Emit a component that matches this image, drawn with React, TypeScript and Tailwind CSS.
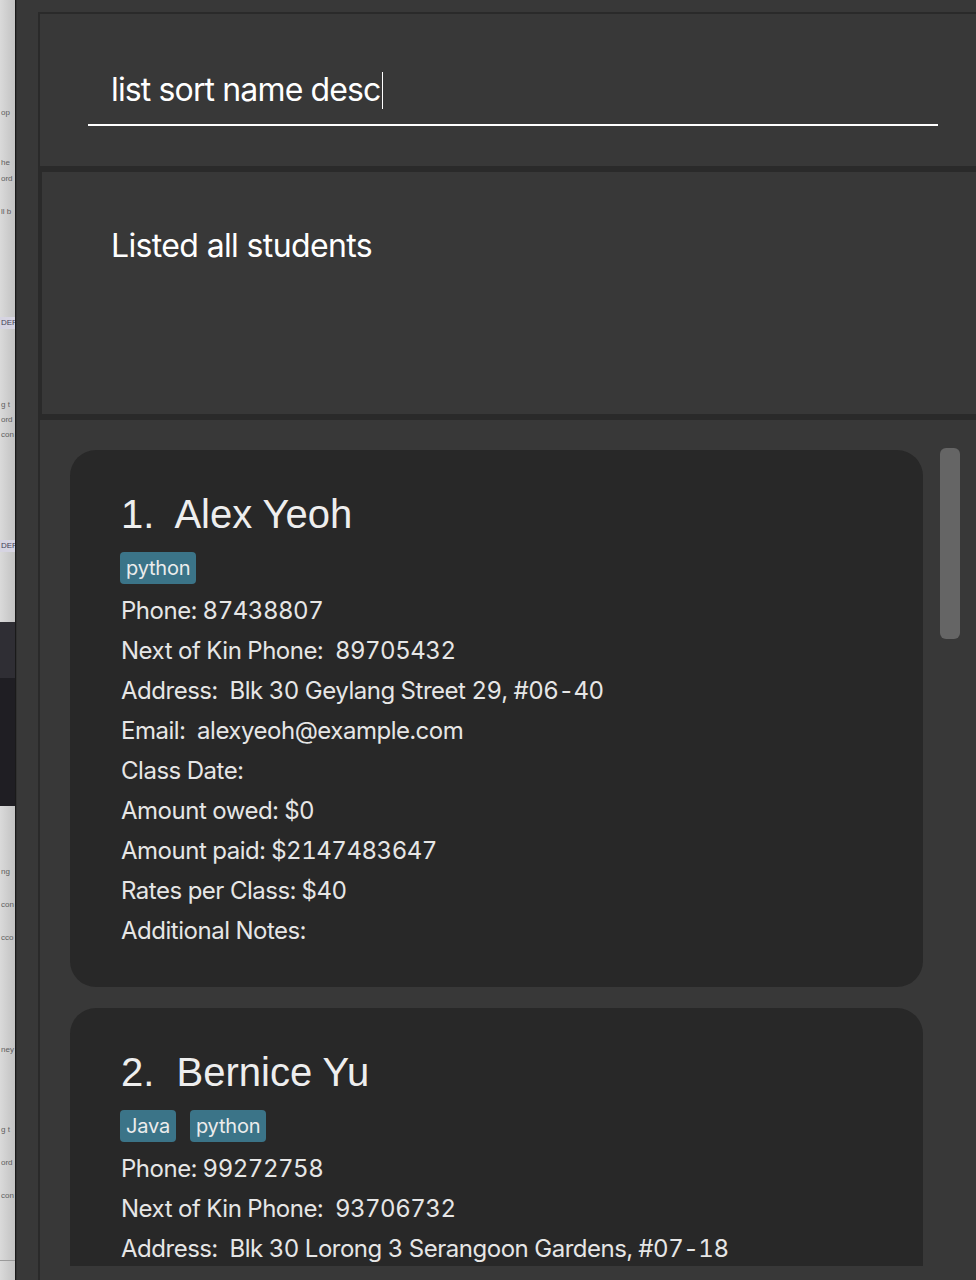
import React from "react";

type Student = {
  name: string;
  tags: string[];
  lines: string[];
};

const students: Student[] = [
  {
    name: "1.  Alex Yeoh",
    tags: ["python"],
    lines: [
      "Phone: 87438807",
      "Next of Kin Phone:  89705432",
      "Address:  Blk 30 Geylang Street 29, #06-40",
      "Email:  alexyeoh@example.com",
      "Class Date: ",
      "Amount owed: $0",
      "Amount paid: $2147483647",
      "Rates per Class: $40",
      "Additional Notes: ",
    ],
  },
  {
    name: "2.  Bernice Yu",
    tags: ["Java", "python"],
    lines: [
      "Phone: 99272758",
      "Next of Kin Phone:  93706732",
      "Address:  Blk 30 Lorong 3 Serangoon Gardens, #07-18",
      "Email:  berniceyu@example.com",
      "Class Date: ",
      "Amount owed: $0",
      "Amount paid: $0",
      "Rates per Class: $40",
      "Additional Notes: ",
    ],
  },
];

function StripText({ mt, text, hl }: { mt: number; text: string; hl?: boolean }) {
  return (
    <div
      className={
        "whitespace-nowrap pl-[1px] h-[12px] leading-[12px] " +
        (hl ? "bg-[#d6d4e2] text-[#44425a]" : "")
      }
      style={{ marginTop: mt }}
    >
      {text}
    </div>
  );
}

function Card({ s }: { s: Student }) {
  return (
    <div className="w-[853px] shrink-0 rounded-[26px] bg-[#282828] pl-[51px] pt-[41px] pb-[36px]">
      <div className="whitespace-pre font-['Liberation_Sans',Arial,sans-serif] text-[40px] leading-[46px] text-[#eeeeee]">
        {s.name}
      </div>
      <div className="ml-[-1px] mt-[15px] flex gap-[14px]">
        {s.tags.map((t) => (
          <div
            key={t}
            className="flex h-[32px] items-center rounded-[4px] bg-[#3b7488] px-[6px] text-[20px] tracking-[-0.01em] text-[#ececec]"
          >
            {t}
          </div>
        ))}
      </div>
      <div className="mt-[7px] flex flex-col">
        {s.lines.map((l, i) => (
          <div
            key={i}
            className="h-[40px] whitespace-pre text-[24px] leading-[40px] tracking-[-0.02em] tabular-nums text-[#e6e6e6]"
          >
            {l}
          </div>
        ))}
      </div>
    </div>
  );
}

export default function App() {
  return (
    <div className="flex h-[1280px] w-[976px] overflow-hidden bg-[#383838] font-['Inter','Noto_Sans',sans-serif]">
      {/* background window fragment */}
      <div className="flex w-[15px] shrink-0 flex-col overflow-hidden bg-linear-to-r from-[#dadada] to-[#c2c2c2] font-['Liberation_Sans',sans-serif] text-[8px] text-[#5e5e5e]">
        <StripText mt={107} text="op" />
        <StripText mt={38} text="he" />
        <StripText mt={4} text="ord" />
        <StripText mt={21} text="ll b" />
        <StripText mt={99} text="DER" hl />
        <StripText mt={70} text="g t" />
        <StripText mt={3} text="ord" />
        <StripText mt={3} text="con" />
        <StripText mt={99} text="DER" hl />
        <div className="mt-[70px] h-[56px] shrink-0 bg-[#2f2e34]" />
        <div className="h-[128px] shrink-0 bg-[#1f1e23]" />
        <StripText mt={60} text="ng" />
        <StripText mt={21} text="con" />
        <StripText mt={21} text="cco" />
        <StripText mt={100} text="ney" />
        <StripText mt={68} text="g t" />
        <StripText mt={21} text="ord" />
        <StripText mt={21} text="con" />
        <div className="mt-[58px] h-[1px] shrink-0 bg-[#9a9a9a]" />
      </div>
      <div className="w-[1px] shrink-0 bg-[#1a1a1a]" />
      <div className="w-[1px] shrink-0 bg-[#303030]" />

      {/* main app */}
      <div className="flex flex-1 flex-col pl-[21px] pt-[12px]">
        <div className="flex flex-1 flex-col bg-[#2a2a2a]">
          {/* command box */}
          <div className="ml-[2px] mt-[2px] h-[152px] shrink-0 bg-[#383838] pl-[48px] pt-[56px]">
            <div className="flex w-[850px] items-center border-b-2 border-white pb-[14px] pl-[23px]">
              <span className="whitespace-pre text-[32px] leading-[40px] tracking-[-0.027em] text-white">
                list sort name desc
              </span>
              <span className="ml-[1px] h-[37px] w-[1.5px] bg-white" />
            </div>
          </div>

          {/* result display */}
          <div className="ml-[4px] mt-[6px] h-[242px] shrink-0 bg-[#383838] pl-[69px] pt-[54px]">
            <div className="text-[32px] leading-[40px] tracking-[-0.02em] text-white">Listed all students</div>
          </div>

          {/* list */}
          <div className="ml-[2px] mt-[6px] flex-1 bg-[#383838]">
            <div className="flex h-[846px] overflow-hidden">
              <div className="flex flex-col gap-[21px] pl-[30px] pt-[30px]">
                {students.map((s) => (
                  <Card key={s.name} s={s} />
                ))}
              </div>
              <div className="ml-[17px] mt-[28px] h-[191px] w-[20px] shrink-0 rounded-[6px] bg-[#656565]" />
            </div>
          </div>
        </div>
      </div>
    </div>
  );
}
